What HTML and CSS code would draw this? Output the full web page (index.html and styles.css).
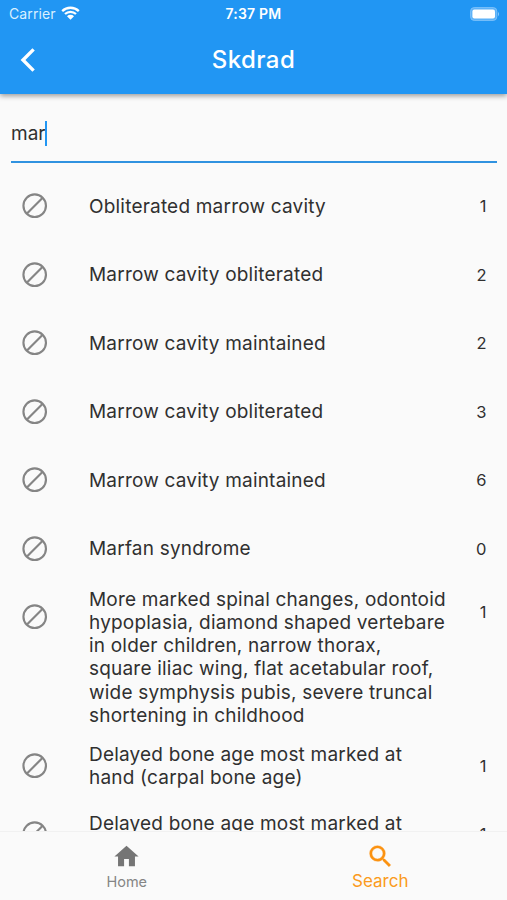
FILE: index.html
```html
<!DOCTYPE html>
<html lang="en">
<head>
<meta charset="utf-8">
<title>Skdrad</title>
<link rel="stylesheet" href="styles.css">
</head>
<body>
<svg class="defs" aria-hidden="true">
  <symbol id="ban" viewBox="0 0 24 24"><circle cx="12" cy="12" r="9.2" fill="none" stroke="currentColor" stroke-width="1.75"/><path d="M5.7 18.3 18.3 5.7" stroke="currentColor" stroke-width="1.75"/></symbol>
</svg>
<div class="screen">
  <header class="header">
    <div class="status">
      <div class="carrier"><span>Carrier</span>
        <svg class="wifi" viewBox="0 0 19 14"><path d="M1.2 5.1A12 12 0 0 1 17.8 5.1M4 8A8 8 0 0 1 15 8" fill="none" stroke="#fff" stroke-width="2.3"/><path d="M6 10.2a5 5 0 0 1 7 0L9.5 13.7z" fill="#fff"/></svg>
      </div>
      <span class="time">7:37 PM</span>
      <svg class="battery" viewBox="0 0 30 14"><rect x=".6" y=".6" width="26.2" height="12.8" rx="3.6" fill="#5bb1f8" stroke="#7cc1fa" stroke-width="1"/><rect x="2.4" y="2.4" width="22.6" height="9.2" rx="2" fill="#fff"/><path d="M28 4.7q2 2.3 0 4.6z" fill="#8bc9fb"/></svg>
    </div>
    <div class="bar">
      <svg class="back" viewBox="0 0 16 26"><path d="M13.6 2.4 3 13 13.6 23.6" fill="none" stroke="#fff" stroke-width="3.4"/></svg>
      <h1 class="title">Skdrad</h1>
    </div>
  </header>
  <div class="field"><span class="query">mar</span><span class="caret"></span></div>
  <ul class="list">
    <li class="row"><svg class="ban"><use href="#ban"/></svg><p class="label">Obliterated marrow cavity</p><span class="count">1</span></li>
    <li class="row"><svg class="ban"><use href="#ban"/></svg><p class="label">Marrow cavity obliterated</p><span class="count">2</span></li>
    <li class="row"><svg class="ban"><use href="#ban"/></svg><p class="label">Marrow cavity maintained</p><span class="count">2</span></li>
    <li class="row"><svg class="ban"><use href="#ban"/></svg><p class="label">Marrow cavity obliterated</p><span class="count">3</span></li>
    <li class="row"><svg class="ban"><use href="#ban"/></svg><p class="label">Marrow cavity maintained</p><span class="count">6</span></li>
    <li class="row"><svg class="ban"><use href="#ban"/></svg><p class="label">Marfan syndrome</p><span class="count">0</span></li>
    <li class="row tall"><svg class="ban"><use href="#ban"/></svg><p class="label">More marked spinal changes, odontoid<br>hypoplasia, diamond shaped vertebare<br>in older children, narrow thorax,<br>square iliac wing, flat acetabular roof,<br>wide symphysis pubis, severe truncal<br>shortening in childhood</p><span class="count">1</span></li>
    <li class="row"><svg class="ban"><use href="#ban"/></svg><p class="label">Delayed bone age most marked at<br>hand (carpal bone age)</p><span class="count">1</span></li>
    <li class="row"><svg class="ban"><use href="#ban"/></svg><p class="label">Delayed bone age most marked at</p><span class="count">1</span></li>
  </ul>
  <nav class="tabs">
    <a class="tab"><svg class="tab-icon" viewBox="0 0 24 24"><path fill="currentColor" d="M10 20v-6h4v6h5v-8h3L12 3 2 12h3v8z"/></svg><span>Home</span></a>
    <a class="tab active"><svg class="tab-icon" viewBox="0 0 24 24"><path fill="currentColor" stroke="currentColor" stroke-width=".3" d="M15.5 14h-.79l-.28-.27A6.471 6.471 0 0 0 16 9.5 6.5 6.5 0 1 0 9.5 16c1.61 0 3.09-.59 4.23-1.57l.27.28v.79l5 4.99L20.49 19l-4.99-5zm-6 0C7.01 14 5 11.99 5 9.5S7.01 5 9.5 5 14 7.01 14 9.5 11.99 14 9.5 14z"/></svg><span>Search</span></a>
  </nav>
</div>
</body>
</html>
```
FILE: styles.css
```css
* { box-sizing: border-box; margin: 0; padding: 0; }
body { font-family: Inter, "Liberation Sans", sans-serif; background: #fafafa; color: #303030; overflow: hidden; }
.defs { position: absolute; width: 0; height: 0; }
.screen { height: 900px; display: flex; flex-direction: column; overflow: hidden; }
.header { flex: none; height: 94px; background: #2196f3; color: #fff; box-shadow: 0 2px 5px rgba(0,0,0,.38); }
.status { height: 26px; display: grid; grid-template-columns: 1fr auto 1fr; align-items: center; padding: 2px 7px 0 9px; font-size: 14px; line-height: 24px; }
.carrier { display: flex; align-items: center; gap: 5px; color: #d9f0ff; letter-spacing: .1px; }
.wifi { width: 19px; height: 14px; margin-top: -2px; }
.time { font-weight: 600; letter-spacing: .2px; margin-left: -2px; }
.battery { width: 30px; height: 14px; justify-self: end; margin-top: -1px; }
.bar { height: 68px; display: grid; grid-template-columns: 40px 1fr 40px; align-items: center; padding: 0 0 1px 0; }
.back { width: 16px; height: 26px; margin-left: 20px; }
.title { text-align: center; font-size: 24px; line-height: 30px; font-weight: 500; letter-spacing: .4px; }
.field { flex: none; height: 69px; margin: 0 10px 0 11px; padding: 27px 0 0; display: flex; align-items: flex-start; border-bottom: 2px solid #3092e0; font-size: 19px; line-height: 25px; }
.caret { width: 2px; height: 25px; background: #2196f3; }
.list { flex: 1; min-height: 0; overflow: hidden; list-style: none; padding-top: 9.2px; }
.row { height: 68.45px; display: grid; grid-template-columns: 66.5px 1fr auto; align-items: center; padding: 0 20.5px 0 22.5px; }
.ban { width: 29.4px; height: 29.4px; color: #858585; margin: -.8px 0 0 -2.4px; }
.label { font-size: 19px; line-height: 23.2px; white-space: nowrap; letter-spacing: .2px; }
.row:not(.tall) .label { padding-top: .5px; }
.count { font-size: 16.5px; line-height: 22px; }
.tall { height: 149px; align-items: start; padding-top: 4.9px; }
.tall .ban { margin-top: 14.2px; }
.tall .count { margin-top: 13.5px; }
.row:last-child { align-items: start; padding-top: 10.8px; }
.row:last-child .ban { margin-top: 8.2px; }
.row:last-child .count { margin-top: 12.4px; }
.tabs { flex: none; height: 69px; display: flex; border-top: 1px solid #f1f1f1; background: #fafafa; }
.tab { flex: 1; display: flex; flex-direction: column; align-items: center; padding-top: 9.5px; color: #757575; font-size: 14.5px; line-height: 22px; }
.tab span { color: #858585; margin-top: 1.5px; }
.tab-icon { width: 29px; height: 29px; margin-bottom: -1px; }
.active { color: #fb9210; font-size: 17px; }
.tab.active span { color: #fb9a20; margin-top: .5px; }
```
